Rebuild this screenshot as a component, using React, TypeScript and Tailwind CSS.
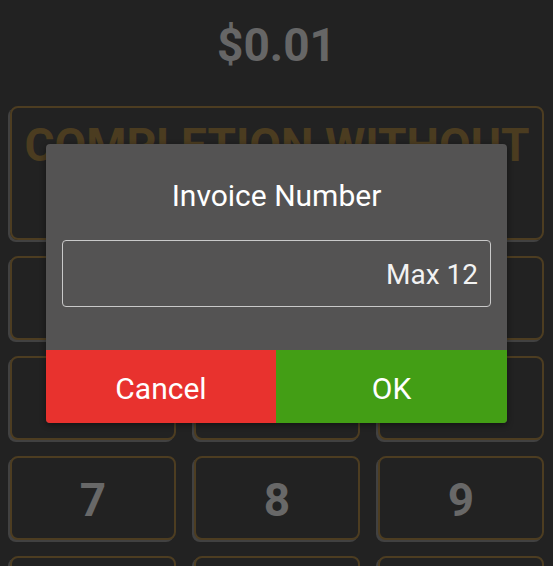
import React from "react";

const keyCls =
  "flex items-center justify-center rounded-[8px] border-2 border-[#4d3d21] shadow-[-2px_2px_0_#414141] bg-[#222222] text-[46px] font-bold text-[#686868] leading-none";

export default function App() {
  const digits = ["1", "2", "3", "4", "5", "6", "7", "8", "9", "", " ", "  "];
  return (
    <div className="relative w-[553px] h-[566px] overflow-hidden bg-[#222222] font-['Roboto',sans-serif]">
      <div className="h-[106px] pt-[22px] text-center text-[46px] leading-[46px] font-bold text-[#666666]">
        $0.01
      </div>
      <div className="pl-[10px] pr-[9px] flex flex-col gap-[16px]">
        <div className="h-[134px] flex items-start justify-center rounded-[8px] border-2 border-[#4d3d21] shadow-[-2px_2px_0_#414141] overflow-hidden">
          <span className="mt-[14px] text-[46px] leading-[46px] font-bold text-[#4b3c20] whitespace-nowrap">
            COMPLETION WITHOUT
          </span>
        </div>
        <div className="grid grid-cols-3 gap-x-[18px] gap-y-[16px] auto-rows-[84px]">
          {digits.map((d, i) => (
            <div key={i} className={keyCls}>
              <span className="mt-[4px]">{d.trim()}</span>
            </div>
          ))}
        </div>
      </div>

      <div className="absolute left-[46px] top-[144px] w-[461px] h-[279px] rounded-[4px] bg-[#545353] shadow-[0_2px_6px_rgba(0,0,0,0.45)] flex flex-col overflow-hidden">
        <div className="h-[96px] flex items-center justify-center pt-[8px] text-[30px] leading-none text-white">
          Invoice Number
        </div>
        <div className="mx-[16px] h-[67px] rounded-[4px] border-[1.5px] border-[#c9c9c9] flex items-center justify-end pr-[12px] pt-[2px] text-[28px] leading-none text-[#f2f2f2]">
          Max 12
        </div>
        <div className="flex-1" />
        <div className="h-[73px] flex">
          <div className="w-[230px] flex items-center justify-center pt-[4px] bg-[#e8322e] text-[30px] leading-none text-white">
            Cancel
          </div>
          <div className="flex-1 flex items-center justify-center pt-[4px] bg-[#439e15] text-[30px] leading-none text-white">
            OK
          </div>
        </div>
      </div>
    </div>
  );
}
